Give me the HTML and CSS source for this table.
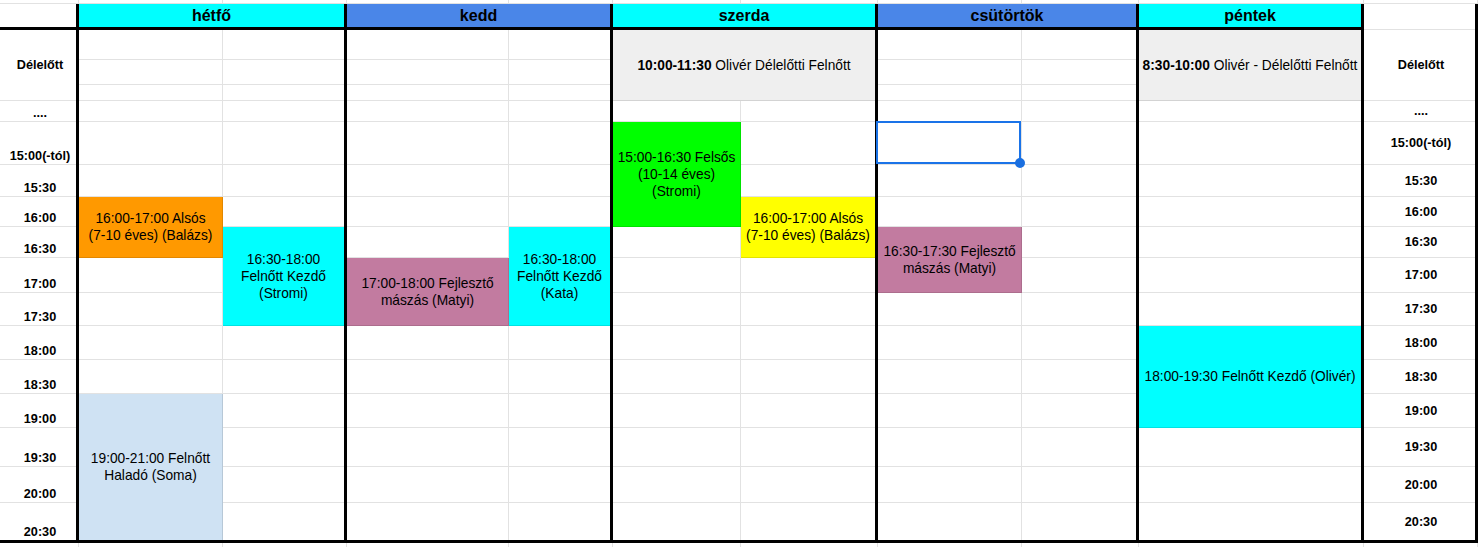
FILE: index.html
```html
<!DOCTYPE html>
<html lang="hu">
<head>
<meta charset="utf-8">
<title>Órarend</title>
<link rel="stylesheet" href="styles.css">
</head>
<body>
<div class="strip top">
  <span></span><span></span><span></span><span></span><span></span><span></span><span></span><span></span><span></span><span></span><span></span>
</div>
<div class="sheet">
  <div class="group times">
    <div class="head"></div>
    <div class="cell t mid r3">Délelőtt</div>
    <div class="cell t">....</div>
    <div class="cell t">15:00(-tól)</div>
    <div class="cell t">15:30</div>
    <div class="cell t">16:00</div>
    <div class="cell t">16:30</div>
    <div class="cell t">17:00</div>
    <div class="cell t">17:30</div>
    <div class="cell t">18:00</div>
    <div class="cell t">18:30</div>
    <div class="cell t">19:00</div>
    <div class="cell t">19:30</div>
    <div class="cell t">20:00</div>
    <div class="cell t end">20:30</div>
  </div>

  <div class="group hetfo">
    <div class="head bg-cyan">hétfő</div>
    <div class="cell l"></div><div class="cell"></div>
    <div class="cell l"></div><div class="cell"></div>
    <div class="cell l"></div><div class="cell"></div>
    <div class="cell l"></div><div class="cell"></div>
    <div class="cell l"></div><div class="cell"></div>
    <div class="cell l"></div><div class="cell"></div>
    <div class="cell l ev r2 bg-orange"><span>16:00-17:00 Alsós <span class="nb">(7-10</span> éves) (Balázs)</span></div><div class="cell"></div>
    <div class="cell ev r3 bg-cyan">16:30-18:00 Felnőtt Kezdő (Stromi)</div>
    <div class="cell l"></div>
    <div class="cell l"></div>
    <div class="cell l"></div><div class="cell"></div>
    <div class="cell l"></div><div class="cell"></div>
    <div class="cell l end ev r4 bg-lightblue">19:00-21:00 Felnőtt Haladó (Soma)</div><div class="cell"></div>
    <div class="cell"></div>
    <div class="cell"></div>
    <div class="cell end"></div>
  </div>

  <div class="group kedd">
    <div class="head bg-blue">kedd</div>
    <div class="cell l"></div><div class="cell"></div>
    <div class="cell l"></div><div class="cell"></div>
    <div class="cell l"></div><div class="cell"></div>
    <div class="cell l"></div><div class="cell"></div>
    <div class="cell l"></div><div class="cell"></div>
    <div class="cell l"></div><div class="cell"></div>
    <div class="cell l"></div><div class="cell"></div>
    <div class="cell l"></div><div class="cell ev r3 bg-cyan">16:30-18:00 Felnőtt Kezdő (Kata)</div>
    <div class="cell l ev r2 bg-mauve">17:00-18:00 Fejlesztő mászás (Matyi)</div>
    <div class="cell l"></div><div class="cell"></div>
    <div class="cell l"></div><div class="cell"></div>
    <div class="cell l"></div><div class="cell"></div>
    <div class="cell l"></div><div class="cell"></div>
    <div class="cell l"></div><div class="cell"></div>
    <div class="cell l end"></div><div class="cell end"></div>
  </div>

  <div class="group szerda">
    <div class="head bg-cyan">szerda</div>
    <div class="cell ev morning c2 r3 bg-gray"><span><b>10:00-11:30</b> Olivér Délelőtti Felnőtt</span></div>
    <div class="cell l"></div><div class="cell"></div>
    <div class="cell l ev r3 bg-green">15:00-16:30 Felsős (10-14 éves) (Stromi)</div><div class="cell"></div>
    <div class="cell"></div>
    <div class="cell ev r2 bg-yellow"><span>16:00-17:00 Alsós <span class="nb">(7-10</span> éves) (Balázs)</span></div>
    <div class="cell l"></div>
    <div class="cell l"></div><div class="cell"></div>
    <div class="cell l"></div><div class="cell"></div>
    <div class="cell l"></div><div class="cell"></div>
    <div class="cell l"></div><div class="cell"></div>
    <div class="cell l"></div><div class="cell"></div>
    <div class="cell l"></div><div class="cell"></div>
    <div class="cell l"></div><div class="cell"></div>
    <div class="cell l end"></div><div class="cell end"></div>
  </div>

  <div class="group csut">
    <div class="head bg-blue">csütörtök</div>
    <div class="cell l"></div><div class="cell"></div>
    <div class="cell l"></div><div class="cell"></div>
    <div class="cell l"></div><div class="cell"></div>
    <div class="cell l"></div><div class="cell"></div>
    <div class="cell l sel"></div><div class="cell"></div>
    <div class="cell l"></div><div class="cell"></div>
    <div class="cell l"></div><div class="cell"></div>
    <div class="cell l ev r2 bg-mauve">16:30-17:30 Fejlesztő mászás (Matyi)</div><div class="cell"></div>
    <div class="cell"></div>
    <div class="cell l"></div><div class="cell"></div>
    <div class="cell l"></div><div class="cell"></div>
    <div class="cell l"></div><div class="cell"></div>
    <div class="cell l"></div><div class="cell"></div>
    <div class="cell l"></div><div class="cell"></div>
    <div class="cell l"></div><div class="cell"></div>
    <div class="cell l end"></div><div class="cell end"></div>
  </div>

  <div class="group pentek">
    <div class="head bg-cyan">péntek</div>
    <div class="cell ev morning r3 bg-gray"><span><b>8:30-10:00</b> Olivér - Délelőtti Felnőtt</span></div>
    <div class="cell"></div>
    <div class="cell"></div>
    <div class="cell"></div>
    <div class="cell"></div>
    <div class="cell"></div>
    <div class="cell"></div>
    <div class="cell"></div>
    <div class="cell ev r3 bg-cyan">18:00-19:30 Felnőtt Kezdő (Olivér)</div>
    <div class="cell"></div>
    <div class="cell"></div>
    <div class="cell end"></div>
  </div>

  <div class="group times-r">
    <div class="head plain"></div>
    <div class="cell t r3">Délelőtt</div>
    <div class="cell t">....</div>
    <div class="cell t">15:00(-tól)</div>
    <div class="cell t">15:30</div>
    <div class="cell t">16:00</div>
    <div class="cell t">16:30</div>
    <div class="cell t">17:00</div>
    <div class="cell t">17:30</div>
    <div class="cell t">18:00</div>
    <div class="cell t">18:30</div>
    <div class="cell t">19:00</div>
    <div class="cell t">19:30</div>
    <div class="cell t">20:00</div>
    <div class="cell t end">20:30</div>
  </div>
</div>
<div class="strip bottom">
  <span></span><span></span><span></span><span></span><span></span><span></span><span></span><span></span><span></span><span></span><span></span>
</div>
</body>
</html>
```
FILE: styles.css
```css
* {
  box-sizing: border-box;
  margin: 0;
  padding: 0;
}

html,
body {
  background: #fff;
}

body {
  font-family: "Liberation Sans", Arial, sans-serif;
  color: #000;
  width: 1478px;
  height: 547px;
  overflow: hidden;
}

/* partial rows above and below the table */
.strip {
  display: grid;
  grid-template-columns: 79px 144px 124px 162px 104px 128px 137px 144px 117px 225px 114px;
  height: 4px;
}

.strip span {
  border-right: 1px solid #e2e2e2;
}

.strip.top span {
  border-bottom: 1px solid #e2e2e2;
}

/* main table */
.sheet {
  display: flex;
  border-bottom: 3px solid #000;
}

.group {
  display: grid;
  flex: none;
  grid-template-rows: 26px 30px 25px 16px 21px 43px 32px 30px 31px 35px 33px 34px 34px 34px 39px 36px 37px;
  border-right: 3px solid #000;
}

.times { grid-template-columns: 76px; }
.times-r { grid-template-columns: 111px; }
.hetfo { grid-template-columns: 144px 121px; }
.kedd { grid-template-columns: 162px 101px; }
.szerda { grid-template-columns: 128px 134px; }
.csut { grid-template-columns: 144px 114px; }
.pentek { grid-template-columns: 222px; }

.head {
  grid-column: 1 / -1;
  display: flex;
  align-items: center;
  justify-content: center;
  font-weight: bold;
  font-size: 16px;
  border-bottom: 3px solid #000;
}

.head.plain {
  border-bottom: 1px solid rgba(0, 0, 0, 0.114);
}

.cell {
  border-bottom: 1px solid rgba(0, 0, 0, 0.114);
}

.l {
  border-right: 1px solid rgba(0, 0, 0, 0.114);
}

.end {
  border-bottom: 0;
}

.r2 { grid-row: span 2; }
.r3 { grid-row: span 3; }
.r4 { grid-row: span 4; }
.c2 { grid-column: span 2; }

/* time labels */
.t {
  display: flex;
  justify-content: center;
  align-items: flex-end;
  padding: 0 0 1px 4px;
  font-weight: bold;
  font-size: 12.7px;
  line-height: 14px;
}

.t.mid {
  align-items: center;
  padding-bottom: 0;
}

.times-r .t {
  align-items: center;
  padding: 0 0 0 3px;
}

/* events */
.ev {
  display: flex;
  align-items: center;
  justify-content: center;
  text-align: center;
  padding: 0 3px;
  font-size: 13.75px;
  line-height: 17px;
}

.nb {
  white-space: nowrap;
}

.morning {
  white-space: nowrap;
}

.bg-cyan { background: #00ffff; }
.bg-blue { background: #4a86e8; }
.bg-orange { background: #ff9900; }
.bg-lightblue { background: #cfe2f3; }
.bg-mauve { background: #c27ba0; }
.bg-green { background: #00ff00; }
.bg-yellow { background: #ffff00; }
.bg-gray { background: #efefef; }

/* selected cell */
.sel {
  position: relative;
}

.sel::after {
  content: "";
  position: absolute;
  top: -1px;
  left: -2px;
  right: 0;
  bottom: 0;
  border: 2px solid #1a73e8;
}

.sel::before {
  content: "";
  position: absolute;
  right: -4px;
  bottom: -4px;
  width: 10px;
  height: 10px;
  border-radius: 50%;
  background: #1a6fe0;
  z-index: 1;
}
```
